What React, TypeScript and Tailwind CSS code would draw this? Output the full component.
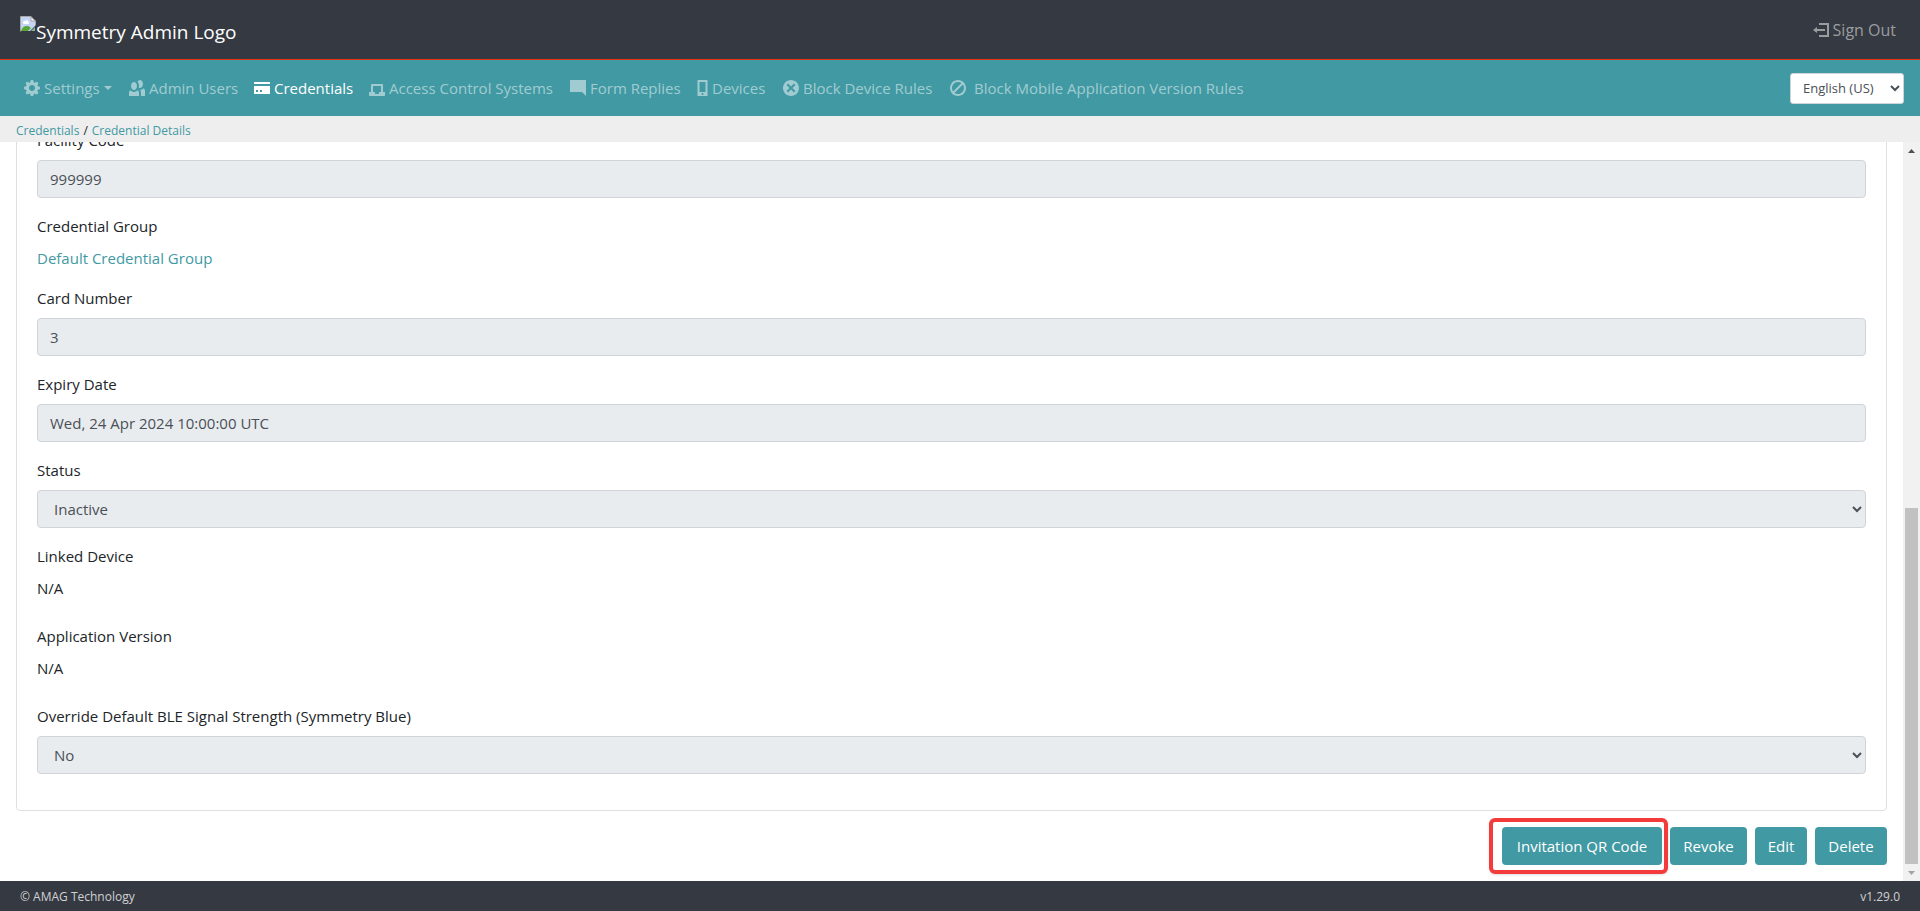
import type { ReactNode } from 'react'

const icons = {
  cog: 'M3.5 0l-.5 1.19c-.1.03-.19.08-.28.13l-1.19-.5-.72.72.5 1.19c-.05.1-.09.18-.13.28l-1.19.5v1l1.19.5c.04.1.08.18.13.28l-.5 1.19.72.72 1.19-.5c.09.04.18.09.28.13l.5 1.19h1l.5-1.19c.09-.04.19-.08.28-.13l1.19.5.72-.72-.5-1.19c.04-.09.09-.19.13-.28l1.19-.5v-1l-1.19-.5c-.03-.09-.08-.19-.13-.28l.5-1.19-.72-.72-1.19.5c-.09-.04-.19-.09-.28-.13l-.5-1.19h-1zm.5 2.5c.83 0 1.5.67 1.5 1.5s-.67 1.5-1.5 1.5-1.5-.67-1.5-1.5.67-1.5 1.5-1.5z',
  people: 'M5.5 0c-.51 0-.95.35-1.22.88.45.54.72 1.28.72 2.13 0 .29-.03.55-.09.81.19.11.38.19.59.19.83 0 1.5-.9 1.5-2s-.67-2-1.5-2zm-3 1c-.83 0-1.5.9-1.5 2s.67 2 1.5 2 1.5-.9 1.5-2-.67-2-1.5-2zm4.75 3.16c-.43.51-1.02.82-1.69.84.27.38.44.84.44 1.34v1.66h2v-2.66c0-.52-.31-.97-.75-1.19zm-6.5 1c-.44.22-.75.67-.75 1.19v1.66h5v-1.66c0-.52-.31-.97-.75-1.19-.45.53-1.06.84-1.75.84s-1.3-.32-1.75-.84z',
  card: 'M.25 1c-.14 0-.25.11-.25.25v.75h8v-.75c0-.14-.11-.25-.25-.25h-7.5zm-.25 2v3.75c0 .14.11.25.25.25h7.5c.14 0 .25-.11.25-.25v-3.75h-8zm1 2h1v1h-1v-1zm2 0h1v1h-1v-1z',
  laptop: 'M1.34 2a.5.5 0 0 0-.34.5v3.5h-1v1.5c0 .28.22.5.5.5h7c.28 0 .5-.22.5-.5v-1.5h-1v-3.5a.5.5 0 0 0-.5-.5h-5a.5.5 0 0 0-.16 0zm.66 1h4v3h-1v1h-2v-1h-1v-3z',
  comment: 'M.09 0c-.06 0-.09.04-.09.09v5.81c0 .05.04.09.09.09h5.91l2 2v-7.91c0-.06-.04-.09-.09-.09h-7.81z',
  phone: 'M.19 0c-.11 0-.19.08-.19.19v7.63c0 .11.08.19.19.19h4.63c.11 0 .19-.08.19-.19v-7.63c0-.11-.08-.19-.19-.19h-4.63zm.81 1h3v5h-3v-5zm1.5 5.5c.28 0 .5.22.5.5s-.22.5-.5.5-.5-.22-.5-.5.22-.5.5-.5z',
  circleX: 'M4 0c-2.2 0-4 1.8-4 4s1.8 4 4 4 4-1.8 4-4-1.8-4-4-4zm-1.5 1.78l1.5 1.5 1.5-1.5.72.72-1.5 1.5 1.5 1.5-.72.72-1.5-1.5-1.5 1.5-.72-.72 1.5-1.5-1.5-1.5.72-.72z',
  ban: 'M4 0c-2.2 0-4 1.8-4 4s1.8 4 4 4 4-1.8 4-4-1.8-4-4-4zm0 1c.66 0 1.26.21 1.75.56l-4.19 4.19c-.35-.49-.56-1.09-.56-1.75 0-1.66 1.34-3 3-3zm2.44 1.25c.35.49.56 1.09.56 1.75 0 1.66-1.34 3-3 3-.66 0-1.26-.21-1.75-.56l4.19-4.19z',
  logout: 'M3 .5v1h4v5h-4v1h5v-7h-5zm-1 2l-2 1.500 2 1.500v-1h4v-1h-4v-1z',
}

const navItems = [
  { label: 'Settings', icon: icons.cog, width: 'w-[89px]', caret: true },
  { label: 'Admin Users', icon: icons.people, width: 'w-[109px]' },
  { label: 'Credentials', icon: icons.card, width: 'w-[99px]', active: true },
  { label: 'Access Control Systems', icon: icons.laptop, width: 'w-[185px]' },
  { label: 'Form Replies', icon: icons.comment, width: 'w-[111px]' },
  { label: 'Devices', icon: icons.phone, width: 'w-[70px]', narrow: true },
  { label: 'Block Device Rules', icon: icons.circleX, width: 'w-[151px]' },
  { label: 'Block Mobile Application Version Rules', icon: icons.ban, width: 'w-[300px]', wide: true },
]

const inputClass =
  'block h-[38px] w-full rounded border border-[#ced4da] bg-[#e9ecef] px-3 text-[15px] text-[#495057] disabled:opacity-100'

const buttonClass = 'h-[38px] rounded bg-[#4199a3] text-[15px] text-white hover:bg-[#37828a]'

function Icon({ path, narrow }: { path: string; narrow?: boolean }) {
  return (
    <svg
      className={narrow ? 'h-4 w-[11px] shrink-0' : 'size-4 shrink-0'}
      viewBox={narrow ? '0 0 5 8' : '0 0 8 8'}
      fill="currentColor"
      aria-hidden="true"
    >
      <path d={path} />
    </svg>
  )
}

function Field({ label, id, children }: { label: string; id: string; children: ReactNode }) {
  return (
    <div className="mb-4">
      <label htmlFor={id} className="mb-2 block">{label}</label>
      {children}
    </div>
  )
}

function TextField({ label, id, value }: { label: string; id: string; value: string }) {
  return (
    <Field label={label} id={id}>
      <input id={id} type="text" value={value} disabled className={inputClass} />
    </Field>
  )
}

function SelectField({ label, id, value }: { label: string; id: string; value: string }) {
  return (
    <Field label={label} id={id}>
      <select id={id} disabled className={inputClass}>
        <option>{value}</option>
      </select>
    </Field>
  )
}

export default function App() {
  return (
    <div className="flex h-screen flex-col overflow-hidden bg-white font-['Open_Sans','Noto_Sans',sans-serif] text-[15px] leading-6 text-[#212529]">
      {/* Top bar */}
      <header className="flex h-[60px] shrink-0 items-center justify-between border-b border-[#e63312] bg-[#353941] pr-6 pl-5">
        <a href="#" className="flex items-start pt-1 text-[19px] leading-8 text-white">
          <svg className="size-4 shrink-0" viewBox="0 0 16 16" aria-hidden="true">
            <path d="M1 1h10l4 4v5l-5 5H1z" fill="#c3d4f5" />
            <path d="M11 1v4h4z" fill="#fff" />
            <path d="M3 6.500a1.500 1.500 0 0 1 2-1.500 2 2 0 0 1 3.500 1 1.200 1.200 0 0 1 0 2H4a1.500 1.500 0 0 1-1-1.500z" fill="#fff" />
            <path d="M1 15c1-4 5-6 8-4.500l2 1.500-3 3z" fill="#56a832" />
            <path d="M15 11v4h-4z" fill="#8fb08a" />
            <path d="M.5 15.500V.500H11L15.500 5v4.500M11 .500V5h4.500" fill="none" stroke="#a6a6a6" />
          </svg>
          <span>Symmetry Admin Logo</span>
        </a>
        <a href="#" className="flex items-center gap-1 text-base text-[#9a9da0]">
          <Icon path={icons.logout} />
          <span>Sign Out</span>
        </a>
      </header>

      {/* Navigation */}
      <div className="flex h-14 shrink-0 items-center justify-between bg-[#4199a3] pr-4 pl-6">
        <nav className="flex items-center gap-4">
          {navItems.map(item => (
            <a
              key={item.label}
              href="#"
              className={`flex items-center whitespace-nowrap ${item.width} ${item.wide ? 'gap-2' : 'gap-1'} ${
                item.active ? 'text-white' : 'text-[#a0ccd1]'
              }`}
            >
              <Icon path={item.icon} narrow={item.narrow} />
              <span>{item.label}</span>
              {item.caret && (
                <svg className="h-1 w-2 shrink-0" viewBox="0 0 8 4" fill="currentColor" aria-hidden="true">
                  <path d="M0 0h8L4 4z" />
                </svg>
              )}
            </a>
          ))}
        </nav>
        <select
          aria-label="Language"
          className="h-[31px] w-[114px] rounded-[3px] border border-[#ced4da] bg-white px-2 text-[13px] text-[#495057]"
        >
          <option>English (US)</option>
        </select>
      </div>

      {/* Breadcrumb */}
      <div className="flex h-[26px] shrink-0 items-center gap-1 bg-[#eee] px-4 pt-1 text-xs">
        <a href="#" className="text-[#4199a3]">Credentials</a>
        <span>/</span>
        <a href="#" className="text-[#4199a3]">Credential Details</a>
      </div>

      {/* Scrolled content, resting at its end */}
      <div className="flex min-h-0 flex-1">
        <main className="flex min-w-0 flex-1 flex-col justify-end overflow-hidden px-4 pb-4">
          <div className="shrink-0 rounded border border-[#dfdfdf] p-5">
            <TextField label="Facility Code" id="facility-code" value="999999" />
            <div className="mb-4">
              <div className="mb-2">Credential Group</div>
              <a href="#" className="block text-[#4199a3]">Default Credential Group</a>
            </div>
            <TextField label="Card Number" id="card-number" value="3" />
            <TextField label="Expiry Date" id="expiry-date" value="Wed, 24 Apr 2024 10:00:00 UTC" />
            <SelectField label="Status" id="status" value="Inactive" />
            <div className="mb-6">
              <div className="mb-2">Linked Device</div>
              <div>N/A</div>
            </div>
            <div className="mb-6">
              <div className="mb-2">Application Version</div>
              <div>N/A</div>
            </div>
            <SelectField label="Override Default BLE Signal Strength (Symmetry Blue)" id="ble" value="No" />
          </div>

          <div className="mt-4 flex shrink-0 justify-end gap-2">
            <div className="relative">
              <button type="button" className={`${buttonClass} w-[160px]`}>Invitation QR Code</button>
              {/* highlight ring */}
              <div className="pointer-events-none absolute -top-[9px] -right-[6px] -bottom-[9px] -left-[13px] rounded-md border-4 border-[#f33b3b] shadow-sm" />
            </div>
            <button type="button" className={`${buttonClass} w-[77px]`}>Revoke</button>
            <button type="button" className={`${buttonClass} w-[52px]`}>Edit</button>
            <button type="button" className={`${buttonClass} w-[72px]`}>Delete</button>
          </div>
        </main>

        {/* Scrollbar */}
        <div className="flex w-[17px] shrink-0 flex-col items-center bg-[#f1f1f1]" aria-hidden="true">
          <div className="flex h-[17px] shrink-0 items-center">
            <svg className="h-1 w-[7px]" viewBox="0 0 7 4" fill="#505050"><path d="M0 4h7L3.500 0z" /></svg>
          </div>
          <div className="min-h-0 w-full grow-[349]" />
          <div className="min-h-0 w-[13px] grow-[356] bg-[#c1c1c1]" />
          <div className="flex h-[17px] shrink-0 items-center">
            <svg className="h-1 w-[7px]" viewBox="0 0 7 4" fill="#a3a3a3"><path d="M0 0h7L3.500 4z" /></svg>
          </div>
        </div>
      </div>

      {/* Footer */}
      <footer className="flex h-[30px] shrink-0 items-center justify-between bg-[#353941] px-5 pt-0.5 text-xs text-[#d0d1d3]">
        <span>© AMAG Technology</span>
        <span>v1.29.0</span>
      </footer>
    </div>
  )
}
